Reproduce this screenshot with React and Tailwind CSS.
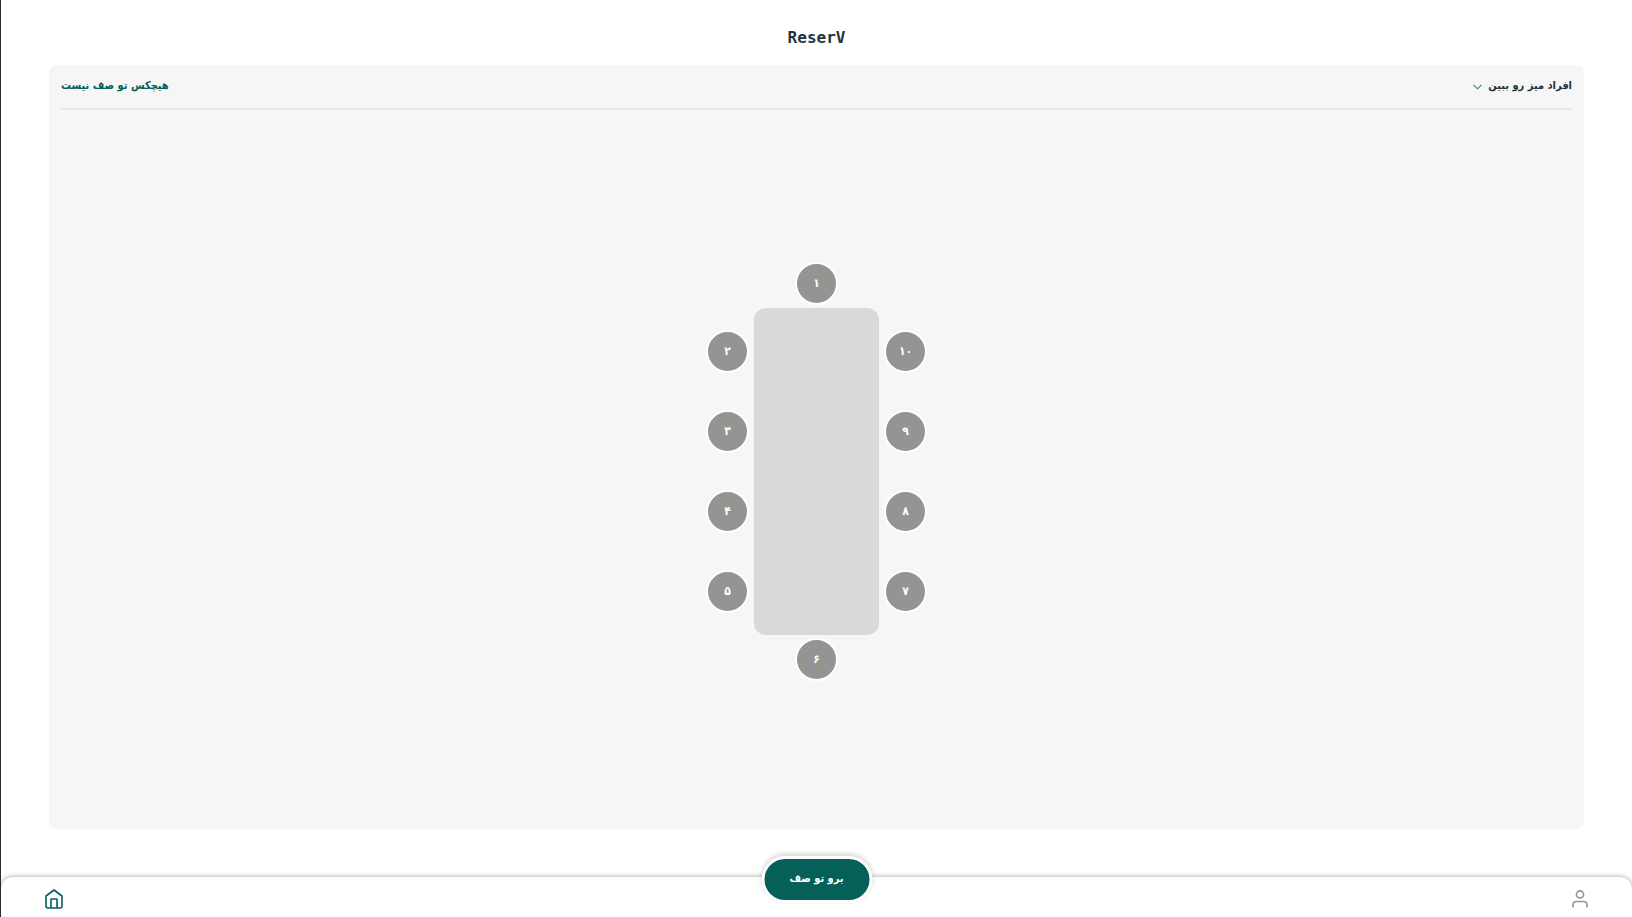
import React from 'react';

const LEFT_SEATS = ['۲', '۳', '۴', '۵'];
const RIGHT_SEATS = ['۱۰', '۹', '۸', '۷'];

const Seat = ({ number }) => (
    <button
        type="button"
        className="flex size-[43px] items-center justify-center rounded-full border-2 border-white bg-[#949492] pb-0.5 text-xs font-bold text-white"
    >
        {number}
    </button>
);

const SeatColumn = ({ seats }) => (
    <div className="flex flex-col items-center justify-between py-[22px]">
        {seats.map((number) => (
            <Seat key={number} number={number} />
        ))}
    </div>
);

const Table = () => (
    <div className="flex flex-col items-center gap-[3px]">
        <Seat number="۱" />
        <div dir="ltr" className="flex gap-[5px]">
            <SeatColumn seats={LEFT_SEATS} />
            <div className="h-[327px] w-[125px] rounded-xl bg-[#d9d9d9]" />
            <SeatColumn seats={RIGHT_SEATS} />
        </div>
        <Seat number="۶" />
    </div>
);

const ChevronIcon = () => (
    <svg className="h-[6px] w-[9px]" viewBox="0 0 9 6" fill="none" stroke="#3c7f83" strokeWidth="1.1" aria-hidden="true">
        <path d="M0.5 0.8 L4.5 4.8 L8.5 0.8" />
    </svg>
);

const HomeIcon = () => (
    <svg className="h-5 w-[18px]" viewBox="0 0 18 20" fill="none" stroke="#046059" strokeWidth="1.6" strokeLinejoin="round" aria-hidden="true">
        <path d="M1 7 L9 1 L17 7 V17 Q17 19 15 19 H3 Q1 19 1 17 Z" />
        <path d="M6 19 V10 H12 V19" />
    </svg>
);

const UserIcon = () => (
    <svg className="h-[18px] w-4" viewBox="0 0 16 18" fill="none" stroke="#949492" strokeWidth="1.6" strokeLinecap="round" aria-hidden="true">
        <circle cx="8" cy="4.5" r="3.6" />
        <path d="M1 17 V15 Q1 11.5 4.5 11.5 H11.5 Q15 11.5 15 15 V17" />
    </svg>
);

const BottomNav = () => (
    <nav className="relative flex h-10 shrink-0 items-center justify-between rounded-t-xl bg-white px-11 pt-1 shadow-[0_0_5px_rgba(0,0,0,0.4)]">
        <a href="#profile" aria-label="پروفایل">
            <UserIcon />
        </a>
        {/* raised action button, sits half above the bar */}
        <button
            type="button"
            className="absolute -top-[21px] left-1/2 h-[47px] w-[111px] -translate-x-1/2 rounded-full border-3 border-white bg-[#046059] text-[11px] font-bold text-white shadow-[0_-2px_5px_rgba(0,0,0,0.18)]"
        >
            برو تو صف
        </button>
        <a href="#home" aria-label="خانه">
            <HomeIcon />
        </a>
    </nav>
);

const App = () => {
    return (
        <div
            dir="rtl"
            className="flex h-screen flex-col overflow-hidden border-l border-[#2b2b2e] bg-white font-['DejaVu_Sans_Condensed','DejaVu_Sans',sans-serif]"
        >
            <header className="flex h-[65px] shrink-0 items-center justify-center pt-2.5">
                <h1 dir="ltr" className="font-['DejaVu_Sans_Mono',monospace] text-base font-bold text-[#22353b]">ReserV</h1>
            </header>

            <main className="mx-12 mb-12 flex grow flex-col rounded-lg bg-[#f6f6f6] px-3">
                <div className="flex h-[45px] shrink-0 items-center justify-between border-b-2 border-[#e8e8e8] text-[11px] font-bold">
                    <button type="button" className="flex items-center gap-1.5 text-[#1e3538]">
                        افراد میز رو ببین
                        <ChevronIcon />
                    </button>
                    <p className="text-[#046059]">هیچکس تو صف نیست</p>
                </div>
                <div className="flex grow items-center justify-center pt-1">
                    <Table />
                </div>
            </main>

            <BottomNav />
        </div>
    );
};

export default App;
